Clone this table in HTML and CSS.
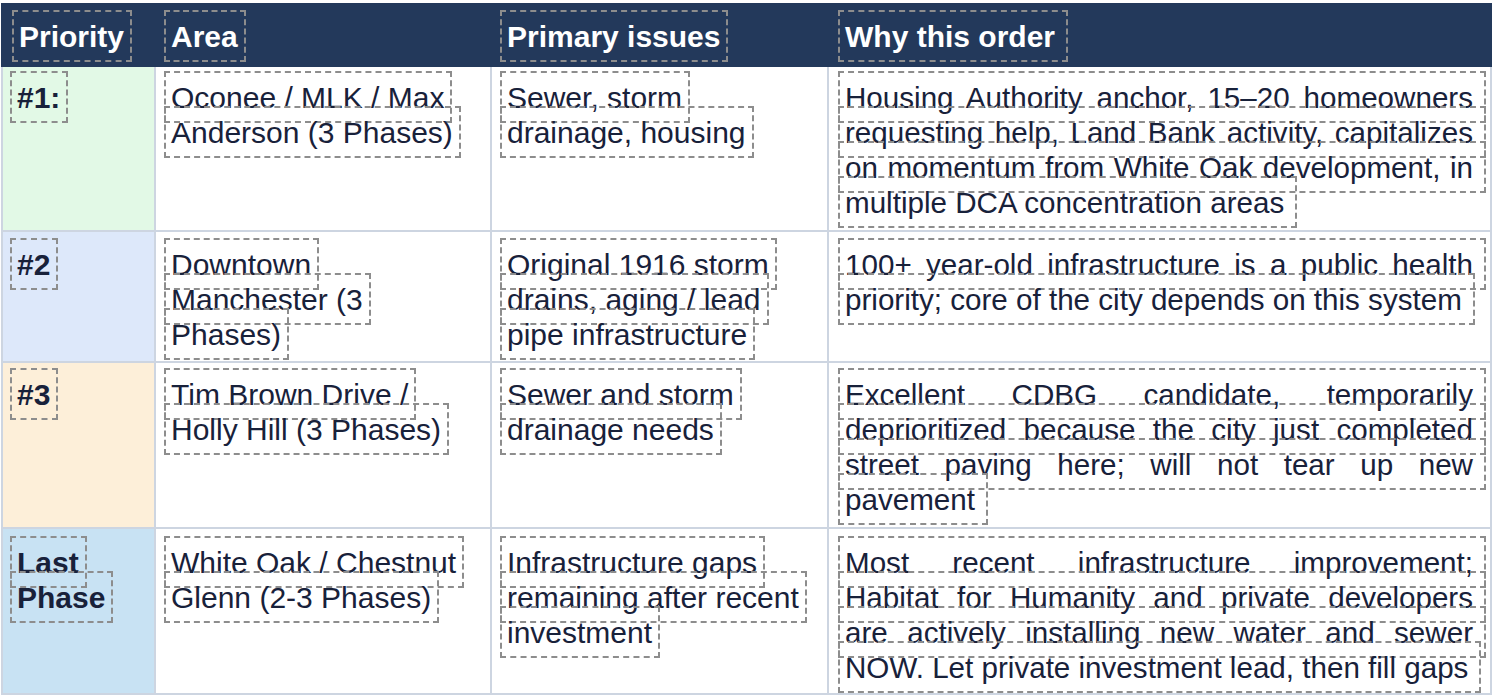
FILE: index.html
```html
<!DOCTYPE html>
<html lang="en">
<head>
<meta charset="utf-8">
<title>Priority order</title>
<link rel="stylesheet" href="styles.css">
</head>
<body>
<div class="table">
  <div class="row head">
    <div class="cell pri"><span class="ln">Priority</span></div>
    <div class="cell"><span class="ln">Area</span></div>
    <div class="cell"><span class="ln">Primary issues</span></div>
    <div class="cell why"><span class="ln">Why this order</span></div>
  </div>
  <div class="row r1">
    <div class="cell pri"><span class="ln">#1:</span></div>
    <div class="cell"><span class="ln">Oconee / MLK / Max</span><span class="ln">Anderson (3 Phases)</span></div>
    <div class="cell"><span class="ln">Sewer, storm</span><span class="ln">drainage, housing</span></div>
    <div class="cell why"><span class="ln j">Housing Authority anchor, 15–20 homeowners</span><span class="ln j">requesting help, Land Bank activity, capitalizes</span><span class="ln j">on momentum from White Oak development, in</span><span class="ln">multiple DCA concentration areas</span></div>
  </div>
  <div class="row r2">
    <div class="cell pri"><span class="ln">#2</span></div>
    <div class="cell"><span class="ln">Downtown</span><span class="ln">Manchester (3</span><span class="ln">Phases)</span></div>
    <div class="cell"><span class="ln">Original 1916 storm</span><span class="ln">drains, aging / lead</span><span class="ln">pipe infrastructure</span></div>
    <div class="cell why"><span class="ln j">100+ year-old infrastructure is a public health</span><span class="ln">priority; core of the city depends on this system</span></div>
  </div>
  <div class="row r3">
    <div class="cell pri"><span class="ln">#3</span></div>
    <div class="cell"><span class="ln">Tim Brown Drive /</span><span class="ln">Holly Hill (3 Phases)</span></div>
    <div class="cell"><span class="ln">Sewer and storm</span><span class="ln">drainage needs</span></div>
    <div class="cell why"><span class="ln j">Excellent CDBG candidate, temporarily</span><span class="ln j">deprioritized because the city just completed</span><span class="ln j">street paving here; will not tear up new</span><span class="ln">pavement</span></div>
  </div>
  <div class="row r4">
    <div class="cell pri"><span class="ln">Last</span><span class="ln">Phase</span></div>
    <div class="cell"><span class="ln">White Oak / Chestnut</span><span class="ln">Glenn (2-3 Phases)</span></div>
    <div class="cell"><span class="ln">Infrastructure gaps</span><span class="ln">remaining after recent</span><span class="ln">investment</span></div>
    <div class="cell why"><span class="ln j">Most recent infrastructure improvement;</span><span class="ln j">Habitat for Humanity and private developers</span><span class="ln j">are actively installing new water and sewer</span><span class="ln">NOW. Let private investment lead, then fill gaps</span></div>
  </div>
</div>
</body>
</html>
```

FILE: styles.css
```css
* { box-sizing: border-box; }

html, body {
  margin: 0;
  background: #ffffff;
}

.table {
  display: grid;
  grid-template-columns: 155px 336px 337px 663px;
  grid-template-rows: 64px 165px 131px 166px 166px;
  width: 1491px;
  margin: 3px 0 0 1px;
  font-family: "Liberation Sans", Arial, sans-serif;
  font-size: 30px;
  color: #18213a;
}

.row { display: contents; }

.cell {
  display: flex;
  flex-direction: column;
  align-items: flex-start;
  padding: 5px 4px 0 8px;
  border-right: 2px solid #cdd5e1;
  border-bottom: 2px solid #cdd5e1;
  min-width: 0;
}

.cell.pri {
  border-left: 2px solid #cdd5e1;
  padding-left: 7px;
  font-weight: bold;
}

.cell.why {
  padding-left: 9px;
  font-size: 29.6px;
}

.ln {
  display: block;
  border: 2px dashed #8d8d8d;
  padding: 8px 6px 7px 5px;
  line-height: 33px;
  margin-bottom: -17px;
  white-space: nowrap;
}

.ln:last-child { margin-bottom: 0; }

.why .ln { padding-right: 11px; }

.ln.j {
  align-self: stretch;
  white-space: normal;
  text-align: justify;
  text-align-last: justify;
}

/* header */
.head .cell {
  background: #23395b;
  color: #ffffff;
  font-weight: bold;
  font-size: 30px;
  border: none;
  padding-top: 7px;
}
.head .cell.pri { padding-left: 11px; }
.head .cell.why { padding-left: 9px; }

/* per-row vertical offsets */
.r1 .cell { padding-top: 4px; }
.r2 .cell { padding-top: 6px; }
.r3 .cell { padding-top: 5px; }
.r4 .cell { padding-top: 7px; }

/* priority column tints */
.r1 .pri { background: #e2f9e6; }
.r2 .pri { background: #dde8fa; }
.r3 .pri { background: #fdefd9; }
.r4 .pri { background: #c8e2f3; }
```
